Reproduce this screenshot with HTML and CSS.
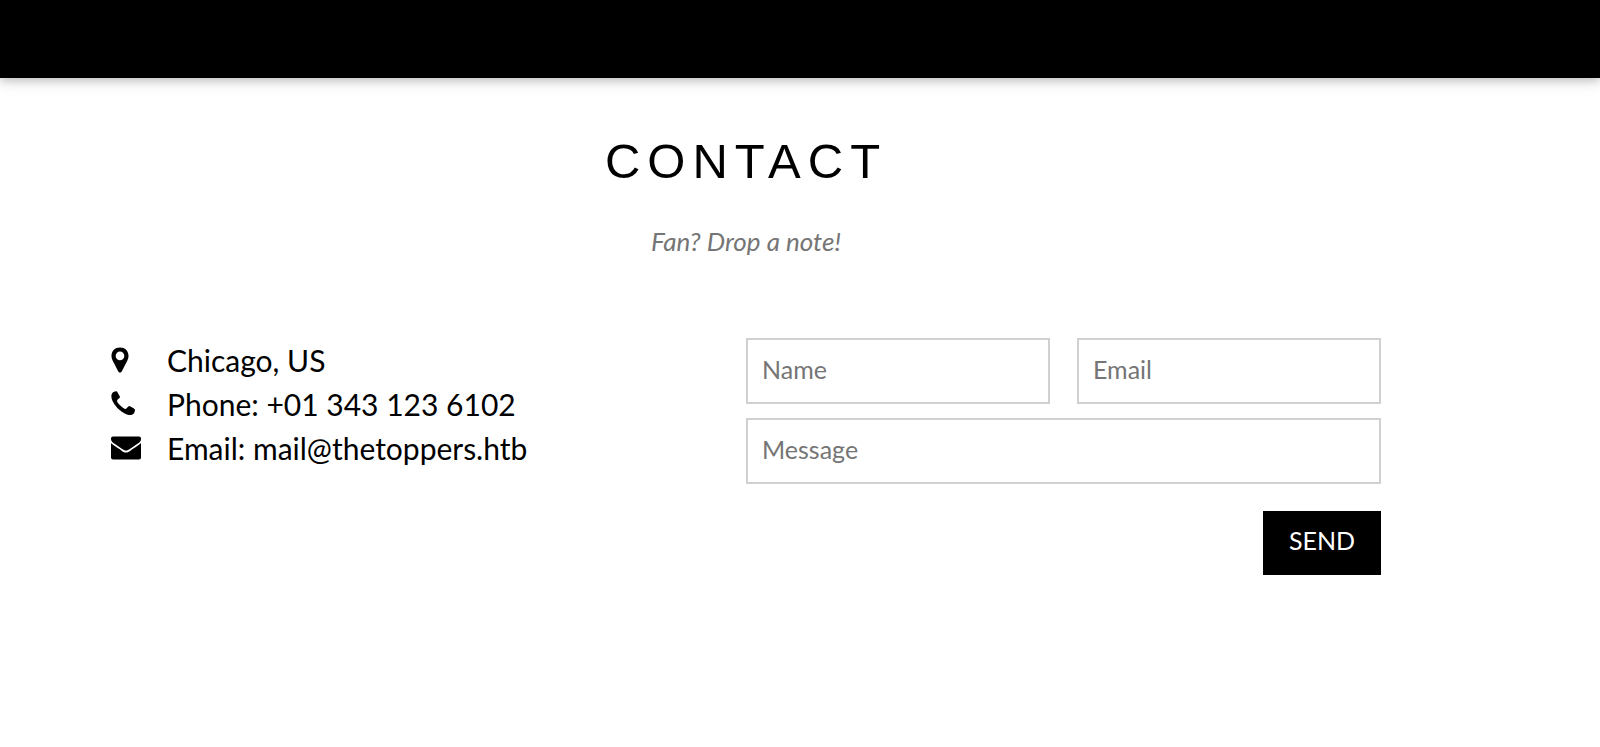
FILE: index.html
```html
<!DOCTYPE html>
<html lang="en">
<head>
  <meta charset="UTF-8">
  <meta name="viewport" content="width=device-width, initial-scale=1.0">
  <title>Contact</title>
  <link rel="stylesheet" href="styles.css">
</head>
<body>
  <header class="navbar"></header>

  <main class="page">
    <section class="contact" id="contact">
      <h2 class="title">CONTACT</h2>
      <p class="tagline">Fan? Drop a note!</p>

      <div class="row">
        <ul class="info">
          <li>
            <svg class="icon" viewBox="0 0 30 30" aria-hidden="true">
              <path fill-rule="evenodd" d="M9 2.5C4 2.5.5 6 .5 10.800c0 1.800.400 3.200 1.100 4.600L7.300 26.500c.700 1.500 2.700 1.500 3.400 0l5.700-11.100c.700-1.400 1.100-2.800 1.100-4.600C17.500 6 14 2.500 9 2.500zM9 6.600a4.300 4.300 0 1 1 0 8.600 4.300 4.300 0 0 1 0-8.600z"/>
            </svg>
            Chicago, US
          </li>
          <li>
            <svg class="icon" viewBox="0 0 30 30" aria-hidden="true">
              <path d="M24 20.800c0 1.400-.6 3-1.200 3.700-1.300 1.100-3 1.700-4.800 1.500-2.600-.3-6.600-2.300-10.300-5.800C3.500 16.200.6 11.400.4 8 .2 5.600 1 3.900 2.500 3 3.600 2.500 5 2.200 5.800 2.400c.5.200 1.100 1.500 1.900 3 .6 1.100 1.300 2.100 1.300 2.700 0 1.300-3 2.400-3 3.600 0 1 1.500 3.200 3.300 4.900 1.900 1.900 4.200 3.500 5.200 3.500 1.200 0 2.500-3.100 3.700-3.100.6 0 1.800.8 3 1.500 1.500.8 2.700 1.500 2.800 2.300z"/>
            </svg>
            Phone: +01 343 123 6102
          </li>
          <li>
            <svg class="icon" viewBox="0 0 30 30" aria-hidden="true">
              <path d="M0 10c.6.700 1.300 1.300 2.100 1.800 3.200 2.200 6.400 4.300 8.500 5.900 1.200.9 2.800 1.800 4.400 1.800s3.200-.9 4.400-1.800c2.200-1.600 5.400-3.700 8.500-5.900.8-.500 1.500-1.100 2.100-1.800v14.500c0 1.100-.9 2-2 2H2a2 2 0 0 1-2-2zM2 3.500h26c1.100 0 2 .9 2 2v.7c0 1.900-1.400 3.200-3.200 4.400l-8 5.300C17.700 16.600 16.300 17.600 15 17.600s-2.700-1-3.800-1.700l-8-5.300C1.800 9.700 0 8.100 0 6.200v-.7c0-1.100.9-2 2-2z"/>
            </svg>
            Email: mail@thetoppers.htb
          </li>
        </ul>

        <form class="form">
          <div class="fields">
            <input class="input" type="text" placeholder="Name" name="Name" aria-label="Name" required>
            <input class="input" type="email" placeholder="Email" name="Email" aria-label="Email" required>
          </div>
          <input class="input" type="text" placeholder="Message" name="Message" aria-label="Message" required>
          <button class="send" type="submit">SEND</button>
        </form>
      </div>
    </section>
  </main>
</body>
</html>
```
FILE: styles.css
```css
* {
  box-sizing: border-box;
}
body {
  margin: 0;
  font-family: Lato, sans-serif;
  font-size: 25px;
  line-height: 1.5;
  color: #000;
  background-color: #fff;
}
.navbar {
  height: 78px;
  background-color: #000;
  box-shadow: 0 3px 8px rgba(0, 0, 0, 0.16), 0 3px 16px rgba(0, 0, 0, 0.12);
}
.page {
  padding-right: 108px;
}
.contact {
  max-width: 1270px;
  margin: 0 auto;
  padding: 46px 0;
}
.title {
  margin: 0;
  font-family: "Liberation Sans", Arial, sans-serif;
  font-size: 49px;
  font-weight: 400;
  line-height: 74px;
  letter-spacing: 7px;
  text-align: center;
}
.tagline {
  margin: 24px 0 0;
  font-size: 26px;
  font-style: italic;
  line-height: 38px;
  color: #757575;
  text-align: center;
}
.row {
  display: grid;
  grid-template-columns: 1fr 1fr;
  margin-top: 78px;
}
.info {
  margin: 0;
  padding: 0;
  list-style: none;
  font-size: 30px;
  line-height: 44px;
}
.info li {
  display: flex;
  align-items: center;
  gap: 26px;
}
.icon {
  width: 30px;
  height: 30px;
  fill: currentColor;
}
.form {
  display: flex;
  flex-direction: column;
  gap: 14px;
}
.fields {
  display: grid;
  grid-template-columns: 1fr 1fr;
  gap: 27px;
}
.input {
  width: 100%;
  height: 66px;
  padding: 11px 14px 15px;
  border: 2px solid #d0d0d0;
  font: inherit;
}
.input::placeholder {
  color: #757575;
}
.send {
  align-self: flex-end;
  margin-top: 13px;
  padding: 11px 26px 15px;
  border: none;
  font: inherit;
  color: #fff;
  background-color: #000;
  cursor: pointer;
}
```
